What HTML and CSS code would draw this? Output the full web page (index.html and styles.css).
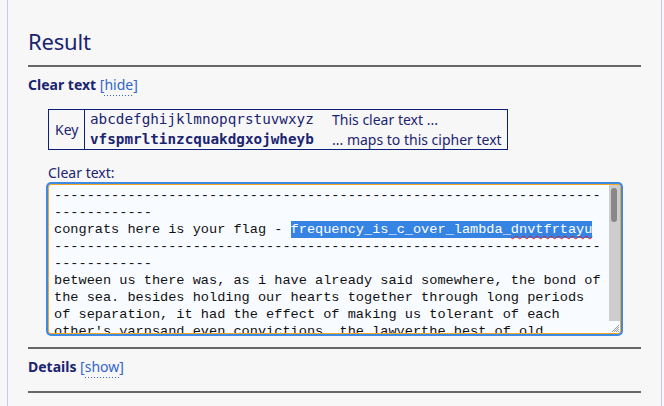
FILE: index.html
```html
<!DOCTYPE html>
<html>
<head>
<meta charset="utf-8">
<title>Result</title>
<link rel="stylesheet" href="styles.css">
</head>
<body>
<div class="page">
  <h2 class="result-head">Result</h2>

  <div class="sec-title"><b>Clear text</b> <span class="toggle">[<a class="dotted">hide</a>]</span></div>

  <div class="key">
    <div class="key-label">Key</div>
    <div class="key-mono">
      <div class="row">abcdefghijklmnopqrstuvwxyz</div>
      <div class="row bold">vfspmrltinzcquakdgxojwheyb</div>
    </div>
    <div class="key-desc">
      <div class="row">This clear text ...</div>
      <div class="row">... maps to this cipher text</div>
    </div>
  </div>

  <div class="field-label">Clear text:</div>
  <div class="textarea">
    <pre class="ta-text">-------------------------------------------------------------------
------------
congrats here is your flag - <span class="sel">frequency_is_c_over_lambda_<span class="spell">dnvtfrtayu</span></span>
-------------------------------------------------------------------
------------
between us there was, as i have already said somewhere, the bond of
the sea. besides holding our hearts together through long periods
of separation, it had the effect of making us tolerant of each
other's yarnsand even convictions. the lawyerthe best of old</pre>
    <div class="scroll">
      <div class="track"><div class="thumb"></div></div>
      <div class="grip">
        <svg width="11" height="12" viewBox="0 0 11 12">
          <path d="M10 4 L3 11 M10 6 L5 11 M10 8 L7 11 M10 10 L9 11" stroke="#9a9a9a" stroke-width="1" fill="none"/>
        </svg>
      </div>
    </div>
  </div>

  <div class="details">
    <div class="sec-title"><b>Details</b> <span class="toggle">[<a class="dotted">show</a>]</span></div>
  </div>
</div>
</body>
</html>
```

FILE: styles.css
```css
html, body {
  margin: 0;
  padding: 0;
  background: #f7f7f7;
}

body {
  font-family: "Noto Sans", "DejaVu Sans", sans-serif;
  color: #1b2470;
}

.page {
  margin-left: 7px;
  width: 655px;
  height: 406px;
  box-sizing: border-box;
  border-left: 1px solid #c3c9f2;
  border-right: 1px solid #c3c9f2;
  padding: 0 20px;
  overflow: hidden;
}

.result-head {
  margin: 26px 0 0;
  padding-bottom: 9px;
  font-size: 22px;
  line-height: 30px;
  font-weight: 400;
  letter-spacing: -0.2px;
  color: #1b2470;
  border-bottom: 2px solid #666;
}

.sec-title {
  margin-top: 8px;
  font-size: 14px;
  line-height: 20px;
  color: #1b2470;
}

.sec-title b {
  font-weight: 700;
}

.toggle {
  color: #3366cc;
}

.dotted {
  color: #3366cc;
  padding-bottom: 2px;
  background-image: linear-gradient(to right, #3366cc 1px, transparent 1px);
  background-size: 3px 1px;
  background-repeat: repeat-x;
  background-position: 0 100%;
}

.key {
  margin: 14px 0 0 20px;
  width: 460px;
  box-sizing: border-box;
  border: 1px solid #0b1f7a;
  display: grid;
  grid-template-columns: 36px 242px 180px;
  font-size: 14px;
  color: #1b2470;
}

.key-label {
  border-right: 1px solid #0b1f7a;
  display: flex;
  align-items: center;
  padding-left: 6px;
}

.key-mono {
  padding-left: 5px;
  font-family: "DejaVu Sans Mono", monospace;
  font-size: 14.3px;
}

.key-desc {
  padding-left: 5px;
}

.row {
  height: 19.5px;
  line-height: 19.5px;
  white-space: nowrap;
}

.bold {
  font-weight: 700;
}

.field-label {
  margin: 13px 0 0 20px;
  font-size: 14px;
  line-height: 19px;
  color: #1b2470;
}

.textarea {
  margin: 2px 0 0 20px;
  width: 573px;
  height: 150px;
  box-sizing: border-box;
  border: 1px solid #f5a623;
  border-radius: 3px;
  box-shadow: 0 0 0 2px #3d8ae5;
  background: #f8fbff;
  display: flex;
  overflow: hidden;
}

.ta-text {
  flex: 1;
  margin: 0;
  padding: 2px 0 0 5px;
  font-family: "Liberation Mono", monospace;
  font-size: 13.6px;
  line-height: 17px;
  color: #111;
  white-space: pre;
  overflow: hidden;
}

.sel {
  background: #3584e4;
  color: #fff;
  padding: 1px 0;
}

.spell {
  text-decoration: underline wavy #e01b24;
  text-decoration-thickness: 1px;
  text-decoration-skip-ink: none;
  text-underline-offset: 2px;
}

.scroll {
  width: 11px;
  display: flex;
  flex-direction: column;
}

.track {
  flex: 1;
  background: #cdcdcd;
  padding: 3px 2px 0 2px;
}

.thumb {
  width: 6px;
  height: 34px;
  border-radius: 3px;
  background: #888;
}

.grip {
  height: 12px;
  display: flex;
  align-items: flex-end;
}

.details {
  margin-top: 13px;
  border-top: 2px solid #666;
  border-bottom: 2px solid #666;
  padding-bottom: 14px;
}
```
